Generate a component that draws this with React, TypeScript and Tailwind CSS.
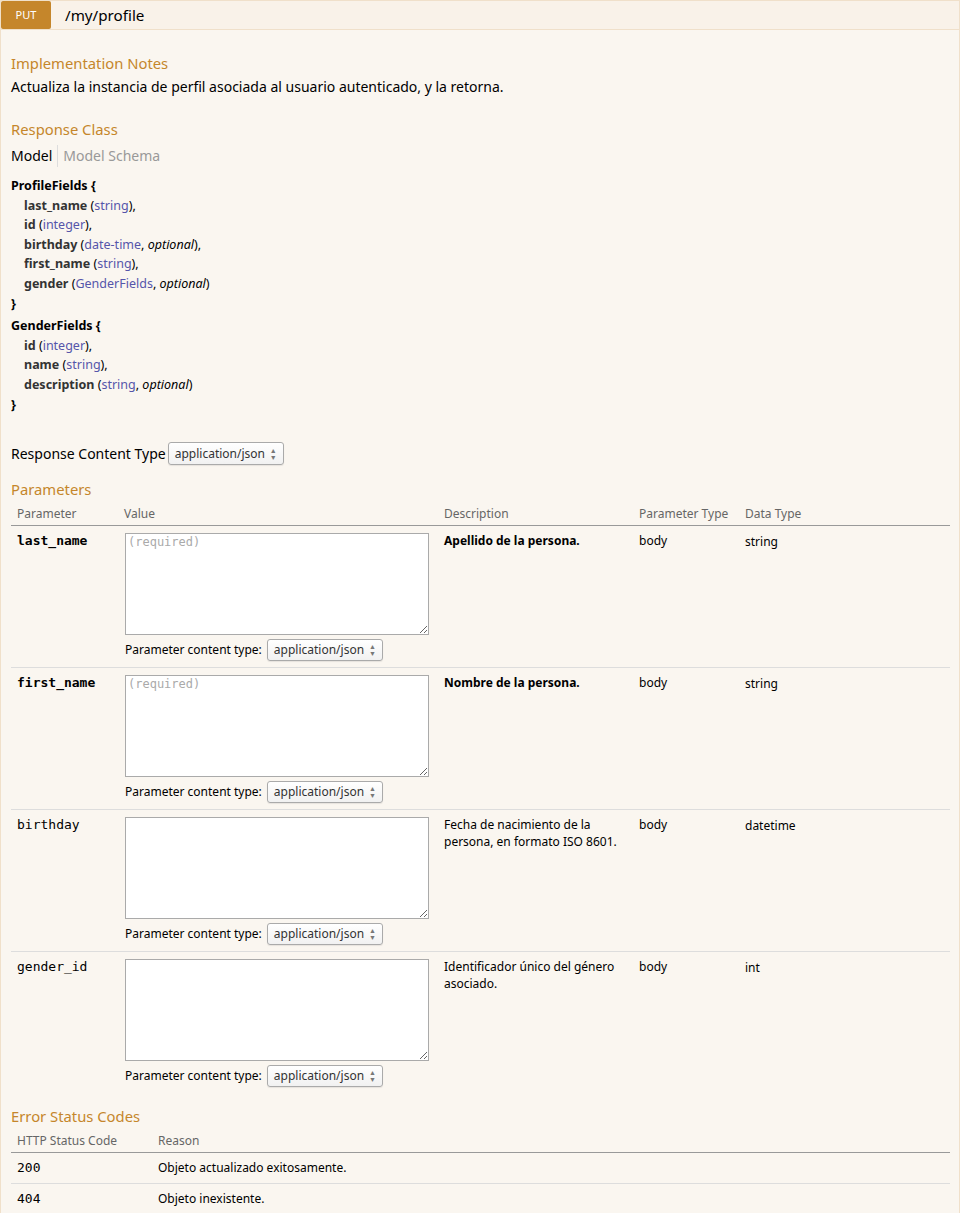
import React from "react";

const sans = "font-['Noto_Sans','Open_Sans',sans-serif]";
const mono = "font-['DejaVu_Sans_Mono','Liberation_Mono',monospace]";

function Select({ className = "" }: { className?: string }) {
  return (
    <div
      className={`inline-flex items-center justify-between rounded-[3px] border border-[#aaa] bg-gradient-to-b from-white to-[#f1f1f1] pl-[6px] pr-[6px] text-[12px] text-[#333] shadow-[0_1px_1px_rgba(0,0,0,0.08)] ${className}`}
    >
      <span>application/json</span>
      <span className="flex flex-col items-center text-[7px] leading-[7px] text-[#777]">
        <span>▲</span>
        <span>▼</span>
      </span>
    </div>
  );
}

const params = [
  { name: "last_name", required: true, desc: "Apellido de la persona.", type: "string" },
  { name: "first_name", required: true, desc: "Nombre de la persona.", type: "string" },
  {
    name: "birthday",
    required: false,
    desc: "Fecha de nacimiento de la persona, en formato ISO 8601.",
    type: "datetime",
  },
  { name: "gender_id", required: false, desc: "Identificador único del género asociado.", type: "int" },
];

function Field({
  name,
  type,
  optional,
  last,
}: {
  name: string;
  type: string;
  optional?: boolean;
  last?: boolean;
}) {
  return (
    <div className="pl-[13px]">
      <span className="font-bold text-[#333]">{name}</span> (
      <span className="text-[#55a]">{type}</span>
      {optional && (
        <>
          , <span className="italic">optional</span>
        </>
      )}
      ){last ? "" : ","}
    </div>
  );
}

export default function App() {
  return (
    <div className={`min-h-[1213px] w-[960px] bg-[#faf5ee] ${sans}`}>
      <div className="border border-[#f0e0ca]">
        {/* Heading */}
        <div className="flex h-[29px] items-center bg-[#f9f2e9] border-b border-[#f0e0ca]">
          <div className="flex h-[28px] w-[50px] items-center justify-center rounded-[2px] bg-[#c5862b] text-[11px] text-white">
            PUT
          </div>
          <div className="ml-[14px] text-[15.2px] text-black">/my/profile</div>
        </div>

        {/* Content */}
        <div className="bg-[#faf6f0] px-[10px] pb-[8px] pt-[22px] text-black">
          <h4 className="text-[14.8px] leading-[22px] text-[#c5862b]">Implementation Notes</h4>
          <p className="mt-[3px] text-[14px] leading-[20px]">
            Actualiza la instancia de perfil asociada al usuario autenticado, y la retorna.
          </p>

          <h4 className="mt-[21px] text-[14.8px] leading-[22px] text-[#c5862b]">Response Class</h4>
          <div className="mt-[5px] flex text-[14px] leading-[22px]">
            <span className="pr-[5px] text-black">Model</span>
            <span className="border-l border-[#ddd] pl-[5px] text-[#999]">Model Schema</span>
          </div>
          <div className="mt-[9px] text-[12.5px] leading-[19.6px]">
            <div>
              <span className="font-bold">ProfileFields</span> <span className="font-bold">{"{"}</span>
            </div>
            <Field name="last_name" type="string" />
            <Field name="id" type="integer" />
            <Field name="birthday" type="date-time" optional />
            <Field name="first_name" type="string" />
            <Field name="gender" type="GenderFields" optional last />
            <div className="font-bold">{"}"}</div>
            <div className="mt-[3px]">
              <span className="font-bold">GenderFields</span> <span className="font-bold">{"{"}</span>
            </div>
            <Field name="id" type="integer" />
            <Field name="name" type="string" />
            <Field name="description" type="string" optional last />
            <div className="font-bold">{"}"}</div>
          </div>

          <div className="mt-[28px] flex items-center text-[14px]">
            <span>Response Content Type</span>
            <Select className="ml-[2px] h-[23px] w-[116px]" />
          </div>

          <h4 className="mt-[13px] text-[14.8px] leading-[22px] text-[#c5862b]">Parameters</h4>
          <table className="mt-[3px] w-[939px] border-collapse text-[12px]">
            <thead>
              <tr className="border-b border-[#999] text-left text-[#666]">
                <th className="w-[113px] py-[2px] pl-[6px] font-normal">Parameter</th>
                <th className="w-[320px] py-[2px] pl-0 font-normal">Value</th>
                <th className="w-[195px] py-[2px] pl-0 font-normal">Description</th>
                <th className="w-[106px] py-[2px] pl-0 font-normal">Parameter Type</th>
                <th className="py-[2px] pl-0 font-normal">Data Type</th>
              </tr>
            </thead>
            <tbody>
              {params.map((p) => (
                <tr key={p.name} className="border-b border-[#ddd] align-top last:border-b-0">
                  <td
                    className={`pl-[6px] pt-[6px] text-[13px] leading-[18px] ${mono} ${p.required ? "font-bold" : ""}`}
                  >
                    {p.name}
                  </td>
                  <td className="pb-[6px] pt-[7px] pl-[1px]">
                    <textarea
                      readOnly
                      placeholder={p.required ? "(required)" : ""}
                      className={`block h-[102px] w-[304px] border border-[#aaa] bg-white px-[2px] pt-[1px] text-[12px] leading-[14px] outline-none placeholder:text-[#aaa] ${mono}`}
                    />
                    <div className="mt-[4px] flex items-center">
                      <span className="text-[12px]">Parameter content type:</span>
                      <Select className="ml-[5px] h-[22px] w-[116px]" />
                    </div>
                  </td>
                  <td className={`pr-[14px] pt-[6px] leading-[17px] ${p.required ? "font-bold" : ""}`}>
                    {p.desc}
                  </td>
                  <td className="pt-[6px] leading-[17px]">body</td>
                  <td className="pt-[7px] leading-[17px]">{p.type}</td>
                </tr>
              ))}
            </tbody>
          </table>

          <h4 className="mt-[12px] text-[14.8px] leading-[22px] text-[#c5862b]">Error Status Codes</h4>
          <table className="mt-[3px] w-[939px] border-collapse text-[12px]">
            <thead>
              <tr className="border-b border-[#999] text-left text-[#666]">
                <th className="w-[147px] py-[2px] pl-[6px] font-normal">HTTP Status Code</th>
                <th className="py-[2px] font-normal">Reason</th>
              </tr>
            </thead>
            <tbody>
              <tr className="border-b border-[#ddd]">
                <td className={`py-[6px] pl-[6px] text-[13px] leading-[18px] ${mono}`}>200</td>
                <td className="py-[6px] leading-[18px]">Objeto actualizado exitosamente.</td>
              </tr>
              <tr>
                <td className={`py-[6px] pl-[6px] text-[13px] leading-[18px] ${mono}`}>404</td>
                <td className="py-[6px] leading-[18px]">Objeto inexistente.</td>
              </tr>
            </tbody>
          </table>
        </div>
      </div>
    </div>
  );
}
